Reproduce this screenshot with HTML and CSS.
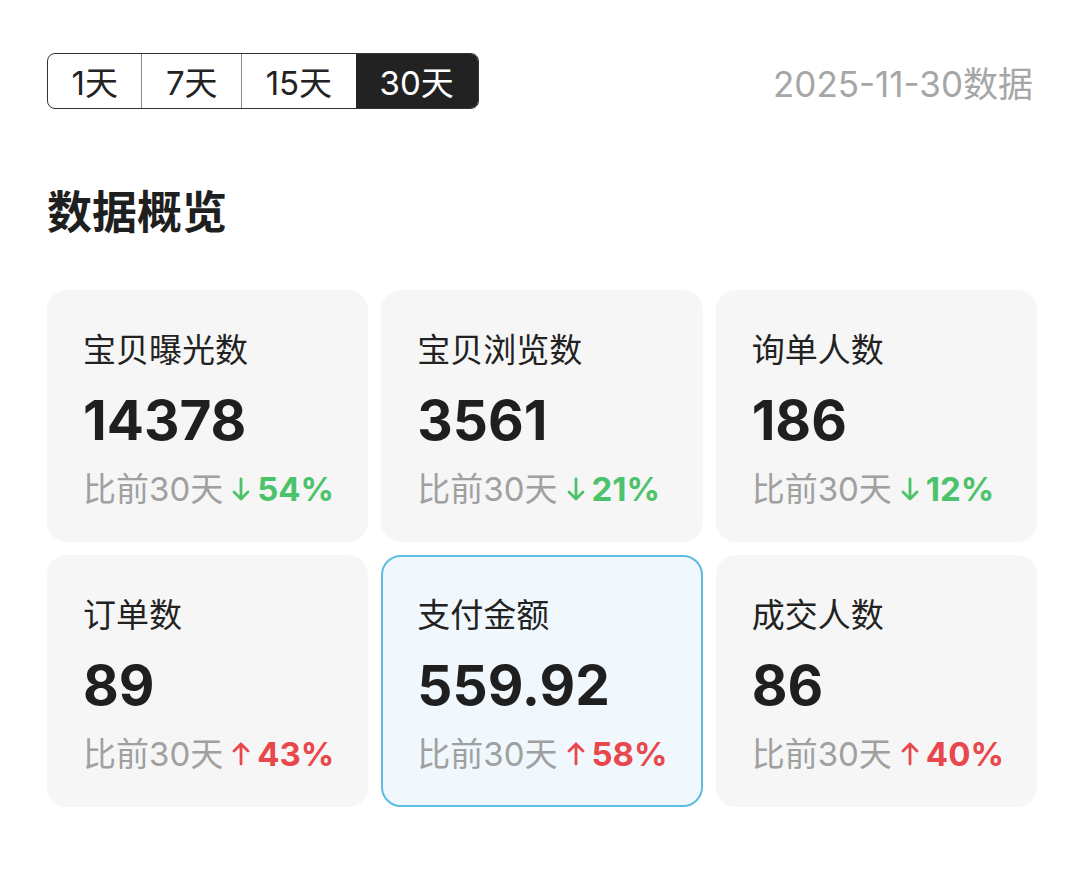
FILE: index.html
```html
<!DOCTYPE html>
<html>
    <head>
        <title>数据概览</title>
        <link rel="stylesheet" href="styles.css">
    </head>
    <body>
        <div class="page">
            <div class="top-bar">
                <div class="range-tabs">
                    <div class="range-tab">1天</div>
                    <div class="range-tab">7天</div>
                    <div class="range-tab">15天</div>
                    <div class="range-tab active">30天</div>
                </div>
                <div class="data-date">2025-11-30数据</div>
            </div>

            <h2 class="section-title">数据概览</h2>

            <div class="stat-grid">
                <div class="stat-card">
                    <div class="stat-label">宝贝曝光数</div>
                    <div class="stat-value">14378</div>
                    <div class="stat-compare">比前30天
                        <span class="trend down">
                            <svg class="arrow" viewBox="0 0 20 28"><path d="M10 4v20M3 17l7 7 7-7"/></svg>54%
                        </span>
                    </div>
                </div>
                <div class="stat-card">
                    <div class="stat-label">宝贝浏览数</div>
                    <div class="stat-value">3561</div>
                    <div class="stat-compare">比前30天
                        <span class="trend down">
                            <svg class="arrow" viewBox="0 0 20 28"><path d="M10 4v20M3 17l7 7 7-7"/></svg>21%
                        </span>
                    </div>
                </div>
                <div class="stat-card">
                    <div class="stat-label">询单人数</div>
                    <div class="stat-value">186</div>
                    <div class="stat-compare">比前30天
                        <span class="trend down">
                            <svg class="arrow" viewBox="0 0 20 28"><path d="M10 4v20M3 17l7 7 7-7"/></svg>12%
                        </span>
                    </div>
                </div>
                <div class="stat-card">
                    <div class="stat-label">订单数</div>
                    <div class="stat-value">89</div>
                    <div class="stat-compare">比前30天
                        <span class="trend up">
                            <svg class="arrow" viewBox="0 0 20 28"><path d="M10 24V4M3 11l7-7 7 7"/></svg>43%
                        </span>
                    </div>
                </div>
                <div class="stat-card selected">
                    <div class="stat-label">支付金额</div>
                    <div class="stat-value">559.92</div>
                    <div class="stat-compare">比前30天
                        <span class="trend up">
                            <svg class="arrow" viewBox="0 0 20 28"><path d="M10 24V4M3 11l7-7 7 7"/></svg>58%
                        </span>
                    </div>
                </div>
                <div class="stat-card">
                    <div class="stat-label">成交人数</div>
                    <div class="stat-value">86</div>
                    <div class="stat-compare">比前30天
                        <span class="trend up">
                            <svg class="arrow" viewBox="0 0 20 28"><path d="M10 24V4M3 11l7-7 7 7"/></svg>40%
                        </span>
                    </div>
                </div>
            </div>
        </div>
    </body>
</html>
```
FILE: styles.css
```css
body {
    margin: 0;
    background-color: #ffffff;
    font-family: Inter, "Noto Sans CJK SC", sans-serif;
    color: #222222;
}

.page {
    width: 990px;
    padding: 53px 0 0 47px;
}

.top-bar {
    display: flex;
    justify-content: space-between;
    align-items: center;
    padding-right: 4px;
}

.range-tabs {
    display: flex;
    height: 56px;
    box-sizing: border-box;
    border: 1.5px solid #333333;
    border-radius: 8px;
    overflow: hidden;
}

.range-tab {
    display: flex;
    align-items: center;
    padding: 0 23.5px;
    font-size: 33px;
    color: #222222;
    border-left: 1.5px solid #8a8a8a;
}

.range-tab:first-child {
    border-left: none;
}

.range-tab.active {
    background-color: #222222;
    color: #ffffff;
    border-left: none;
    padding: 0 24px;
}

.data-date {
    font-size: 35px;
    color: #a6a6a6;
}

.section-title {
    margin: 73px 0 52px 0;
    font-size: 45px;
    line-height: 56px;
    font-weight: bold;
    font-family: "Noto Sans CJK SC", sans-serif;
    color: #1f1f1f;
}

.stat-grid {
    display: grid;
    grid-template-columns: repeat(3, 1fr);
    gap: 13px;
}

.stat-card {
    box-sizing: border-box;
    height: 252px;
    padding: 36px 20px 0 34px;
    background-color: #f6f6f6;
    border-radius: 20px;
    border: 2px solid transparent;
    white-space: nowrap;
}

.stat-card.selected {
    background-color: #f0f8fd;
    border-color: #5bbde1;
}

.stat-label {
    font-size: 33px;
    line-height: 44px;
    color: #222222;
}

.stat-value {
    margin-top: 18px;
    font-size: 55px;
    line-height: 60px;
    font-weight: bold;
    color: #1f1f1f;
}

.stat-compare {
    margin-top: 17px;
    display: flex;
    align-items: center;
    font-size: 33px;
    line-height: 44px;
    color: #a0a0a0;
}

.trend {
    display: flex;
    align-items: center;
    flex-shrink: 0;
    margin-left: 8px;
    font-size: 33px;
    font-weight: bold;
}

.trend.down {
    color: #4cc36a;
}

.trend.up {
    color: #e8474b;
}

.arrow {
    width: 20px;
    height: 28px;
    margin-right: 6px;
    fill: none;
    stroke: currentColor;
    stroke-width: 2.8;
    stroke-linecap: round;
    stroke-linejoin: round;
}
```
